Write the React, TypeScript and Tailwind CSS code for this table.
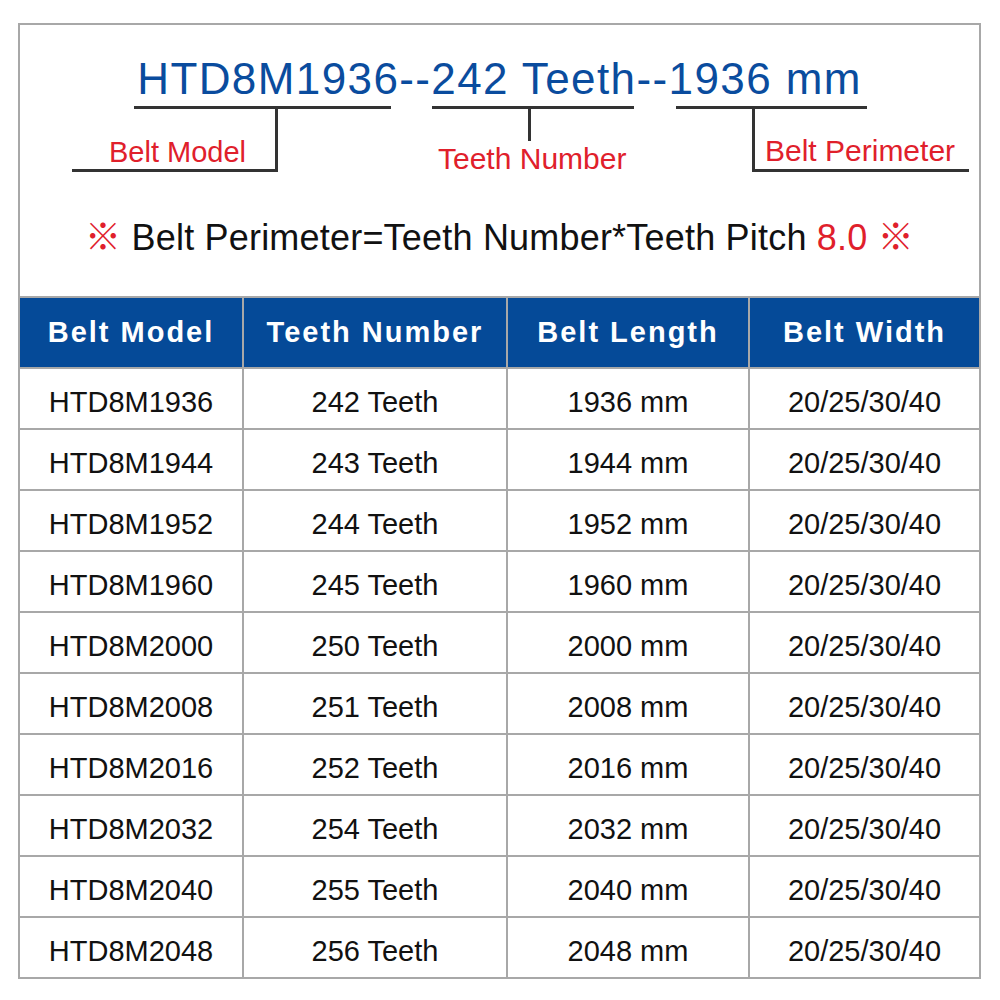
const rows = [
   ['HTD8M1936', '242 Teeth', '1936 mm'],
   ['HTD8M1944', '243 Teeth', '1944 mm'],
   ['HTD8M1952', '244 Teeth', '1952 mm'],
   ['HTD8M1960', '245 Teeth', '1960 mm'],
   ['HTD8M2000', '250 Teeth', '2000 mm'],
   ['HTD8M2008', '251 Teeth', '2008 mm'],
   ['HTD8M2016', '252 Teeth', '2016 mm'],
   ['HTD8M2032', '254 Teeth', '2032 mm'],
   ['HTD8M2040', '255 Teeth', '2040 mm'],
   ['HTD8M2048', '256 Teeth', '2048 mm'],
]

const headers = ['Belt Model', 'Teeth Number', 'Belt Length', 'Belt Width']

const font = { fontFamily: '"Liberation Sans", Arial, "Noto Sans CJK SC", sans-serif' }

function Cell({ children, first }: { children: React.ReactNode; first?: boolean }) {
   return (
      <div
         className={`h-[61px] border-t-2 border-[#a8a8a8] flex items-center justify-center pt-[8px] text-[29px] text-[#111] ${first ? '' : 'border-l-2'}`}
      >
         {children}
      </div>
   )
}

export default function App() {
   return (
      <div className="w-[1000px] h-[1000px] bg-white pt-[23px] pl-[18px]" style={font}>
         <div className="w-[963px] border-2 border-[#a8a8a8]">
            {/* Diagram header */}
            <div className="relative h-[271px]">
               <div className="pt-[32px] text-center text-[44px] leading-none tracking-[1.4px] text-[#0a4c9e]">
                  HTD8M1936--242 Teeth--1936 mm
               </div>

               {/* connector lines */}
               <div className="absolute left-[114px] top-[81px] w-[257px] h-[3px] bg-[#333]" />
               <div className="absolute left-[255px] top-[82px] w-[3px] h-[65px] bg-[#333]" />
               <div className="absolute left-[52px] top-[144px] w-[206px] h-[3px] bg-[#333]" />

               <div className="absolute left-[412px] top-[81px] w-[202px] h-[3px] bg-[#333]" />
               <div className="absolute left-[508px] top-[82px] w-[3px] h-[34px] bg-[#333]" />

               <div className="absolute left-[656px] top-[81px] w-[191px] h-[3px] bg-[#333]" />
               <div className="absolute left-[732px] top-[82px] w-[3px] h-[65px] bg-[#333]" />
               <div className="absolute left-[732px] top-[144px] w-[217px] h-[3px] bg-[#333]" />

               {/* labels */}
               <div className="absolute left-[89px] top-[113px] text-[29px] leading-none text-[#e0202b]">Belt Model</div>
               <div className="absolute left-[418px] top-[119px] text-[30px] leading-none text-[#e0202b]">Teeth Number</div>
               <div className="absolute left-[745px] top-[111px] text-[30px] leading-none text-[#e0202b]">Belt Perimeter</div>

               <div className="mt-[119px] text-center text-[36px] leading-none tracking-[0.2px] text-[#111]">
                  <span className="text-[#e0202b]">※</span> Belt Perimeter=Teeth Number*Teeth Pitch{' '}
                  <span className="text-[#e0202b]">8.0 ※</span>
               </div>
            </div>

            {/* Table */}
            <div className="grid grid-cols-[222px_264px_242px_231px]">
               {headers.map((h, i) => (
                  <div
                     key={h}
                     className={`h-[71px] border-t-2 border-[#a8a8a8] bg-[#054a98] flex items-center justify-center text-[29px] font-bold tracking-[2px] text-white ${i > 0 ? 'border-l-2' : ''}`}
                  >
                     {h}
                  </div>
               ))}
               {rows.map((r) => (
                  <div key={r[0]} className="contents">
                     <Cell first>{r[0]}</Cell>
                     <Cell>{r[1]}</Cell>
                     <Cell>{r[2]}</Cell>
                     <Cell>20/25/30/40</Cell>
                  </div>
               ))}
            </div>
         </div>
      </div>
   )
}
